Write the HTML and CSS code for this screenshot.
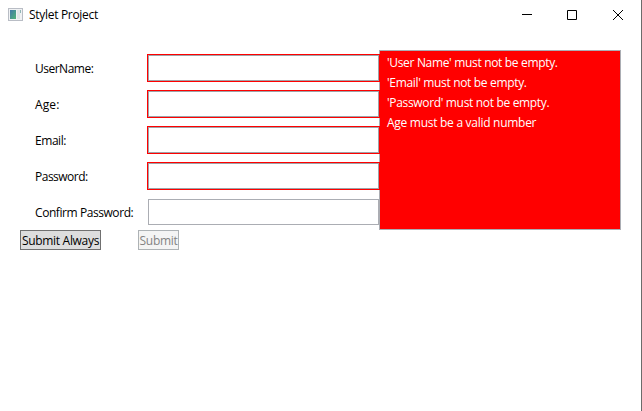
FILE: index.html
```html
<!DOCTYPE html>
<html lang="en">
<head>
<meta charset="utf-8">
<title>Stylet Project</title>
<link rel="stylesheet" href="styles.css">
</head>
<body>
<div class="window">
  <header class="titlebar">
    <svg class="app-icon" width="16" height="14" viewBox="0 0 16 14" shape-rendering="crispEdges">
      <defs><linearGradient id="pane" x1="0" y1="0" x2="1" y2="1"><stop offset="0" stop-color="#4278a8"/><stop offset="1" stop-color="#4fb477"/></linearGradient></defs>
      <rect x="0" y="0" width="15" height="13" fill="#b9bdc5"/>
      <rect x="1" y="1" width="13" height="11" fill="#f0f2f4"/>
      <rect x="2" y="2" width="6" height="9" fill="url(#pane)"/>
      <rect x="9" y="2" width="3" height="9" fill="#e0e5e6"/>
      <rect x="12" y="2" width="1" height="3" fill="#8fb5b5"/>
    </svg>
    <h1 class="title">Stylet Project</h1>
    <div class="controls">
      <svg width="10" height="10" viewBox="0 0 10 10"><path d="M0 4.5H10"/></svg>
      <svg width="10" height="10" viewBox="0 0 10 10"><path d="M.5.5H9.5V9.5H.5Z"/></svg>
      <svg class="close" width="10" height="10" viewBox="0 0 10 10"><path d="M0 0L10 10M10 0L0 10"/></svg>
    </div>
  </header>
  <main class="content">
    <form class="form">
      <label class="row"><span class="label user">UserName:</span><input class="field invalid" type="text"></label>
      <label class="row"><span class="label age">Age:</span><input class="field invalid" type="text"></label>
      <label class="row"><span class="label email">Email:</span><input class="field invalid" type="text"></label>
      <label class="row"><span class="label pass">Password:</span><input class="field invalid" type="password"></label>
      <label class="row"><span class="label confirm">Confirm Password:</span><input class="field" type="password"></label>
      <div class="actions">
        <button class="button always" type="button">Submit Always</button>
        <button class="button submit" type="button" disabled>Submit</button>
      </div>
    </form>
    <ul class="errors">
      <li>'User Name' must not be empty.</li>
      <li>'Email' must not be empty.</li>
      <li>'Password' must not be empty.</li>
      <li>Age must be a valid number</li>
    </ul>
  </main>
</div>
</body>
</html>
```
FILE: styles.css
```css
* { box-sizing: border-box; }
body {
  margin: 0;
  background: #fff;
  color: #000;
  font: 12px/16px "Open Sans", "Noto Sans", sans-serif;
  letter-spacing: -0.3px;
}
.window {
  width: 642px;
  height: 411px;
  border-right: 1px solid #6b6b6b;
  overflow: hidden;
}
.titlebar {
  display: flex;
  align-items: center;
  height: 29px;
  padding: 0 18px 0 8px;
}
.app-icon { display: block; }
.title {
  margin: 0 0 0 5px;
  font-size: 12px;
  font-weight: 400;
}
.controls {
  display: flex;
  gap: 35px;
  margin-left: auto;
}
.controls svg {
  display: block;
  fill: none;
  stroke: #000;
}
.controls .close { margin-left: 1px; }
.content {
  display: flex;
  align-items: flex-start;
  padding: 21px 0 0 20px;
}
.form {
  width: 359px;
  padding-top: 5px;
}
.row {
  display: flex;
  align-items: center;
  height: 26px;
  margin-bottom: 10px;
}
.row:nth-child(5) { margin-bottom: 5px; }
.label {
  width: 128px;
  padding: 2px 0 0 15px;
  white-space: nowrap;
}
.user { letter-spacing: -0.5px; }
.age { letter-spacing: 0.1px; }
.email { letter-spacing: -0.45px; }
.pass { letter-spacing: -0.5px; }
.confirm { letter-spacing: -0.43px; }
.field {
  width: 231px;
  height: 26px;
  padding: 0 4px;
  border: 1px solid #abadb3;
  background: #fff;
  outline: none;
}
.invalid {
  position: relative;
  z-index: 1;
  border-color: #a0a2a8;
  box-shadow: 0 0 0 1px #f00;
}
.actions {
  display: flex;
  gap: 37px;
}
.button {
  height: 20px;
  padding: 2px 0 0;
  border: 1px solid #707070;
  background: #ddd;
  color: #000;
  font: inherit;
  letter-spacing: inherit;
  line-height: 16px;
  white-space: nowrap;
}
.always { width: 81px; }
.submit {
  width: 41px;
  border-color: #adb2b5;
  background: #f4f4f4;
  color: #838383;
}
.errors {
  width: 242px;
  height: 180px;
  margin: 0;
  padding: 2px 7px;
  border: 1px solid #abadb3;
  background: #f00;
  color: #fff;
  letter-spacing: -0.33px;
  list-style: none;
  line-height: 20px;
}
.errors li:last-child { letter-spacing: -0.28px; }
```
